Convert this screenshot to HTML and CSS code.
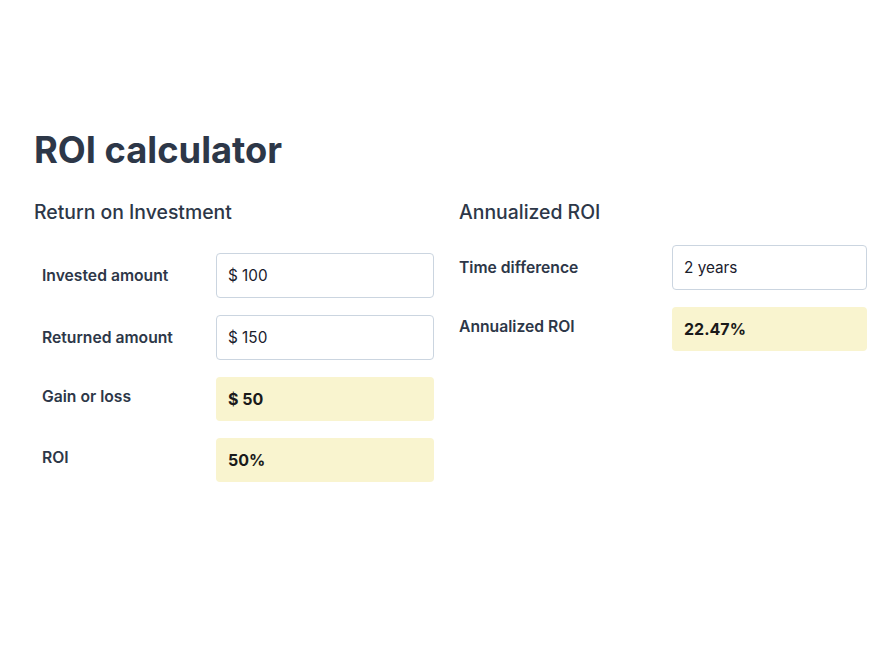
FILE: index.html
```html
<!DOCTYPE html>
<html lang="en">
<head>
<meta charset="utf-8">
<title>ROI calculator</title>
<link rel="stylesheet" href="styles.css">
</head>
<body>
<main class="page">
  <h1 class="title">ROI calculator</h1>
  <div class="columns">
    <section class="col col-left">
      <h2 class="heading">Return on Investment</h2>
      <div class="grid grid-left">
        <div class="label label-in">Invested amount</div>
        <div class="field">$ 100</div>
        <div class="label label-in">Returned amount</div>
        <div class="field">$ 150</div>
        <div class="label label-out">Gain or loss</div>
        <div class="output">$ 50</div>
        <div class="label label-out">ROI</div>
        <div class="output">50%</div>
      </div>
    </section>
    <section class="col col-right">
      <h2 class="heading">Annualized ROI</h2>
      <div class="grid grid-right">
        <div class="label label-in flush">Time difference</div>
        <div class="field">2 years</div>
        <div class="label label-out flush">Annualized ROI</div>
        <div class="output">22.47%</div>
      </div>
    </section>
  </div>
</main>
</body>
</html>
```

FILE: styles.css
```css
* { box-sizing: border-box; }
html, body { margin: 0; padding: 0; background: #ffffff; }
body {
  font-family: Inter, "Noto Sans", "Liberation Sans", sans-serif;
  color: #2d3748;
}
.page {
  padding: 128px 0 0 34px;
}
.title {
  margin: 0;
  font-size: 36.3px;
  line-height: 44px;
  font-weight: 700;
  color: #2d3748;
}
.columns {
  display: flex;
  gap: 25px;
  margin-top: 27px;
}
.col-left { width: 400px; }
.col-right { width: 408px; }
.heading {
  margin: 0;
  font-size: 19.4px;
  line-height: 26px;
  font-weight: 500;
  color: #2d3748;
}
.grid {
  display: grid;
  row-gap: 17px;
}
.grid-left {
  grid-template-columns: 182px 218px;
  margin-top: 28px;
}
.grid-right {
  grid-template-columns: 213px 195px;
  margin-top: 20px;
}
.label {
  font-size: 15.7px;
  font-weight: 600;
  color: #2d3748;
  padding-left: 8px;
  line-height: 20px;
}
.label.flush { padding-left: 0; }
.label-in { align-self: center; }
.label-out { align-self: center; margin-top: -5px; }
.field {
  height: 45px;
  border: 1px solid #cbd5e0;
  border-radius: 4px;
  padding: 0 11px;
  display: flex;
  align-items: center;
  font-size: 15.3px;
  color: #1a202c;
  background: #ffffff;
}
.output {
  height: 44px;
  border-radius: 4px;
  background: #f9f4cf;
  padding: 0 12px;
  display: flex;
  align-items: center;
  font-size: 16px;
  font-weight: 700;
  color: #1a1a1a;
}
```
